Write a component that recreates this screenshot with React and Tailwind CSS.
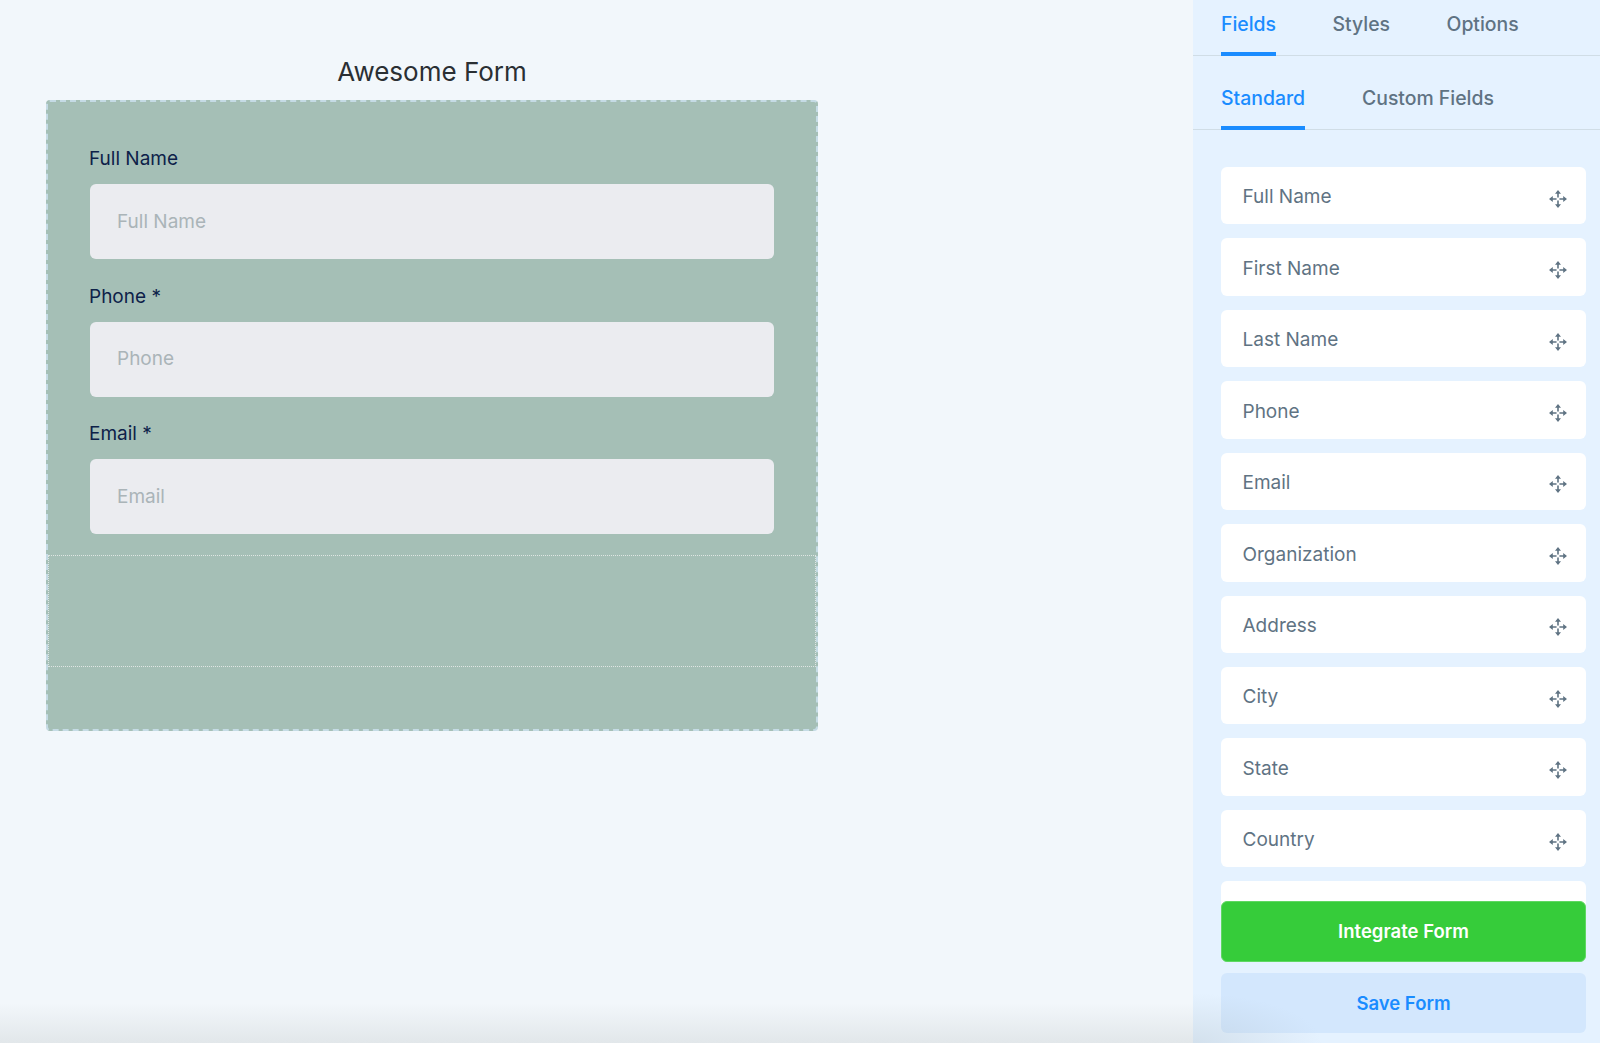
import React from 'react';

const FIELDS = ['Full Name', 'First Name', 'Last Name', 'Phone', 'Email', 'Organization', 'Address', 'City', 'State', 'Country'];
const FORM_FIELDS = [
  { label: 'Full Name', placeholder: 'Full Name' },
  { label: 'Phone *', placeholder: 'Phone' },
  { label: 'Email *', placeholder: 'Email' },
];

const MoveIcon = () => (
  <svg width="20" height="20" viewBox="0 0 20 20" fill="none" className="text-[#5f7383]">
    <path d="M10 4v4M10 12v4M4 10h4M12 10h4" stroke="currentColor" strokeWidth="1.6" strokeLinecap="round" />
    <path d="M10 1 13 4.8H7zM10 19 7 15.2h6zM1 10 4.8 7v6zM19 10 15.2 13V7z" fill="currentColor" />
  </svg>
);

const Tab = ({ label, active, className }) => (
  <div
    className={`-mb-px flex h-[calc(100%+1px)] items-center border-b-4 text-[19.4px] font-medium ${className} ${
      active ? 'border-b-[#1a8cff] text-[#1a8cff]' : 'border-b-transparent text-[#5f7383]'
    }`}
  >
    {label}
  </div>
);

export default function App() {
  return (
    <div className="relative flex h-[1043px] w-[1600px] overflow-hidden bg-[#f2f7fb] font-['Inter',sans-serif]">
      <main className="flex-1 pl-[46px] pt-[52px]">
        <div className="w-[772px]">
          <h1 className="h-[48px] text-center text-[26px] leading-[40px] text-[#2a2f33]">Awesome Form</h1>
          <div className="h-[630.5px] rounded border-2 border-dashed border-[#c5dbe5] bg-[#a5bfb6]">
            <div className="px-[42px] pt-[40px]">
              {FORM_FIELDS.map((field) => (
                <div key={field.label} className="mb-[20.5px]">
                  <label className="-ml-px block h-[42px] pt-[3px] text-[19px] leading-[28px] text-[#0d2149]">{field.label}</label>
                  <div className="flex h-[75px] items-center rounded-md bg-[#ebecf0] px-[27px] pt-[1px] text-[19px] text-[#aab4b8]">
                    {field.placeholder}
                  </div>
                </div>
              ))}
            </div>
            <div className="h-[112.5px] border border-dotted border-[#dfe6e3]" />
          </div>
        </div>
      </main>

      <aside className="relative h-full w-[407px] bg-[#e5f2ff]">
        <div className="flex h-[56px] gap-[56.5px] border-b border-[#d0dde6] pl-[28px]">
          <Tab label="Fields" active className="pb-[2px]" />
          <Tab label="Styles" className="pb-[2px]" />
          <Tab label="Options" className="pb-[2px]" />
        </div>
        <div className="flex h-[74px] gap-[57px] border-b border-[#d0dde6] pl-[28px]">
          <Tab label="Standard" active className="pt-[16px]" />
          <Tab label="Custom Fields" className="pt-[16px]" />
        </div>
        <div className="flex flex-col gap-[14px] pl-[28px] pr-[14px] pt-[37px]">
          {FIELDS.map((name) => (
            <div key={name} className="flex h-[57.43px] items-center justify-between rounded-md bg-white pl-[21.5px] pr-[18px] text-[19px] text-[#5f7383]">
              <span className="pt-[4px]">{name}</span>
              <span className="pt-[6px]"><MoveIcon /></span>
            </div>
          ))}
          <div className="h-[57.43px] rounded-md bg-white" />
        </div>
        <div className="absolute bottom-[10px] left-[28px] right-[14px] flex flex-col gap-[11px]">
          <button className="h-[61px] rounded-md border border-[#5fd862] bg-[#36cc3a] pt-[1px] text-[18.5px] font-semibold text-white">Integrate Form</button>
          <button className="h-[60px] rounded-md bg-[#d3e7fd] pt-[1px] text-[18.5px] font-semibold text-[#1a8cff]">Save Form</button>
        </div>
        <div className="pointer-events-none absolute bottom-0 left-0 h-[50px] w-[130px] bg-[radial-gradient(ellipse_at_bottom_left,rgba(170,185,195,0.3),transparent_70%)]" />
      </aside>

      <div className="pointer-events-none absolute bottom-0 left-0 h-[40px] w-[1193px] bg-gradient-to-t from-[#e2e7ea] to-transparent" />
    </div>
  );
}
